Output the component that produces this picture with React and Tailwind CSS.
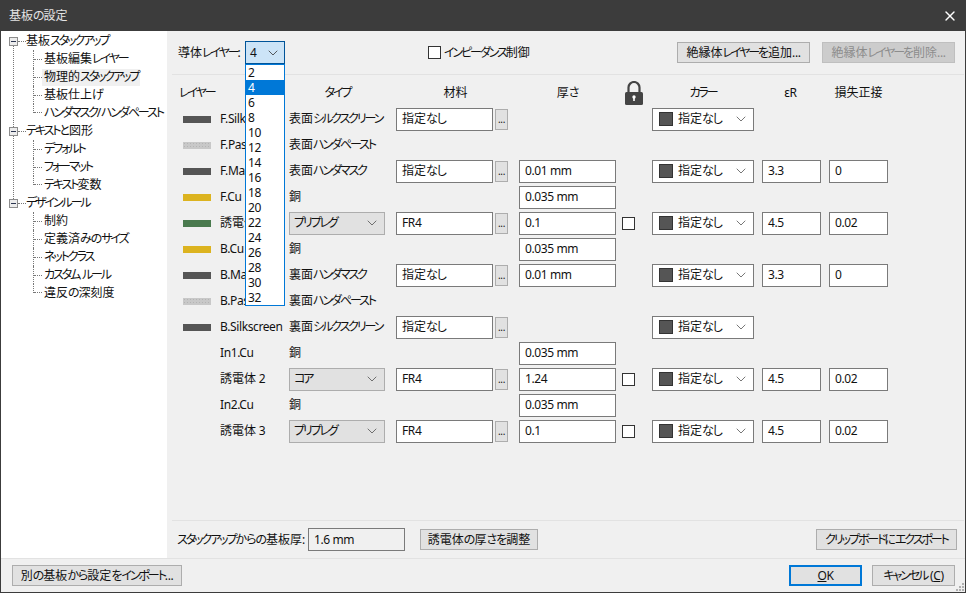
import React from 'react'
import { X, ChevronDown } from 'lucide-react'

const tree = [
  { label: '基板スタックアップ', children: ['基板編集レイヤー', '物理的スタックアップ', '基板仕上げ', 'ハンダマスク/ハンダペースト'] },
  { label: 'テキストと図形', children: ['デフォルト', 'フォーマット', 'テキスト変数'] },
  { label: 'デザインルール', children: ['制約', '定義済みのサイズ', 'ネットクラス', 'カスタム ルール', '違反の深刻度'] },
]

const DARK = 'bg-[#555555]'
const PASTE = 'bg-[#c8c8c8]'
const CU = 'bg-[#dcb31f]'
const GREEN = 'bg-[#4a7a4e]'
const COLS = 'grid grid-cols-[37px_69px_107px_123px_103px_30px_110px_67px_59px]'

const layers = [
  { swatch: DARK, name: 'F.Silkscreen', type: '表面シルクスクリーン', material: '指定なし', color: true },
  { swatch: PASTE, name: 'F.Paste', type: '表面ハンダペースト' },
  { swatch: DARK, name: 'F.Mask', type: '表面ハンダマスク', material: '指定なし', thick: '0.01 mm', color: true, er: '3.3', loss: '0' },
  { swatch: CU, name: 'F.Cu', type: '銅', thick: '0.035 mm' },
  { swatch: GREEN, name: '誘電体 1', select: 'プリプレグ', material: 'FR4', thick: '0.1', lock: true, color: true, er: '4.5', loss: '0.02' },
  { swatch: CU, name: 'B.Cu', type: '銅', thick: '0.035 mm' },
  { swatch: DARK, name: 'B.Mask', type: '裏面ハンダマスク', material: '指定なし', thick: '0.01 mm', color: true, er: '3.3', loss: '0' },
  { swatch: PASTE, name: 'B.Paste', type: '裏面ハンダペースト' },
  { swatch: DARK, name: 'B.Silkscreen', type: '裏面シルクスクリーン', material: '指定なし', color: true },
  { name: 'In1.Cu', type: '銅', thick: '0.035 mm' },
  { name: '誘電体 2', select: 'コア', material: 'FR4', thick: '1.24', lock: true, color: true, er: '4.5', loss: '0.02' },
  { name: 'In2.Cu', type: '銅', thick: '0.035 mm' },
  { name: '誘電体 3', select: 'プリプレグ', material: 'FR4', thick: '0.1', lock: true, color: true, er: '4.5', loss: '0.02' },
]

const counts = ['2', '4', '6', '8', '10', '12', '14', '16', '18', '20', '22', '24', '26', '28', '30', '32']

// the original UI font keeps kanji full width but has much narrower kana
const Jp = ({ text }) => (
  <span>
    {text.match(/[\u4e00-\u9fff]+|[\u3040-\u309f]+|[\u30a0-\u30ff]+|[^\u3040-\u30ff\u4e00-\u9fff]+/g).map((part, i) => {
      if (/[\u4e00-\u9fff]/.test(part)) return <span key={i} className="tracking-normal">{part}</span>
      if (/[\u3040-\u309f]/.test(part)) return <span key={i} className="tracking-[-1px]">{part}</span>
      if (/[\u30a0-\u30ff]/.test(part)) return <span key={i} className="tracking-[-2.1px]">{part}</span>
      return <span key={i}>{part}</span>
    })}
  </span>
)

const Btn = ({ text, children, className = '' }) => (
  <button className={`h-[21px] bg-[#e1e1e1] border border-[#adadad] text-[#111] whitespace-nowrap ${className}`}>
    <Jp text={text} />
    {children}
  </button>
)

const Field = ({ value, className = '' }) => (
  <div className={`h-[23px] bg-white border border-[#7a7a7a] pl-[5px] flex items-center ${className}`}>
    <Jp text={value} />
  </div>
)

const TreeGroup = ({ group, last }) => (
  <div className="relative">
    {!last && <span className="absolute left-[12px] top-[13px] -bottom-[5px] border-l border-dotted border-[#777]"></span>}
    <div className="h-[18px] flex items-center pl-[8px]">
      <span className="w-[9px] h-[9px] border border-[#8c8c8c] bg-[#ececec] flex items-center justify-center shrink-0 relative">
        <span className="w-[5px] h-px bg-[#2a3550]"></span>
      </span>
      <span className="w-[8px] border-t border-dotted border-[#777] shrink-0"></span>
      <Jp text={group.label} />
    </div>
    {group.children.map((child, i) => {
      const end = i === group.children.length - 1
      return (
        <div key={child} className="h-[18px] flex items-center pl-[32px]">
          <span className={`w-[9px] shrink-0 border-l border-dotted border-[#777] flex ${end ? 'h-[9px] self-start items-end' : 'h-full items-center'}`}>
            <span className="w-full border-t border-dotted border-[#777]"></span>
          </span>
          <span className={`px-[2px] h-[17px] flex items-center whitespace-nowrap ${child === '物理的スタックアップ' ? 'bg-[#f0f0f0]' : ''}`}>
            <Jp text={child} />
          </span>
        </div>
      )
    })}
  </div>
)

const LockIcon = () => (
  <svg width="18" height="24" viewBox="0 0 18 24" className="ml-[3px] mb-[1px] self-end">
    <path d="M3.5 12V6.5a5.5 5.5 0 0 1 11 0V12" fill="none" stroke="#444" strokeWidth="2.2" />
    <rect x="0" y="11" width="18" height="13" rx="1.5" fill="#444" />
    <circle cx="9" cy="16" r="1.7" fill="#fff" />
    <rect x="8.2" y="16" width="1.6" height="4" fill="#fff" />
  </svg>
)

const LayerRow = ({ row }) => (
  <div className={`${COLS} h-[26px] items-center`}>
    <div>
      {row.swatch && (
        <div className={`w-[28px] h-[7px] ${row.swatch} ${row.swatch === PASTE ? 'bg-[radial-gradient(#b4b4b4_0.5px,transparent_0.6px)] bg-[length:3px_3px]' : ''}`}></div>
      )}
    </div>
    <div className="whitespace-nowrap overflow-hidden"><Jp text={row.name} /></div>
    <div className="whitespace-nowrap">
      {row.select ? (
        <div className="w-[96px] h-[23px] bg-[#e1e1e1] border border-[#adadad] pl-[4px] pr-[4px] flex items-center justify-between">
          <Jp text={row.select} />
          <ChevronDown size={16} strokeWidth={1.1} color="#444" />
        </div>
      ) : <Jp text={row.type} />}
    </div>
    <div>
      {row.material && (
        <div className="flex items-center gap-[2px]">
          <Field value={row.material} className="w-[97px]" />
          <button className="w-[13px] h-[21px] bg-[#e1e1e1] border border-[#adadad] text-[10px] leading-[16px]">...</button>
        </div>
      )}
    </div>
    <div>{row.thick && <Field value={row.thick} className="w-[97px]" />}</div>
    <div>{row.lock && <div className="w-[13px] h-[13px] bg-white border border-[#333]"></div>}</div>
    <div>
      {row.color && (
        <div className="w-[102px] h-[23px] bg-white border border-[#7a7a7a] pl-[6px] pr-[4px] flex items-center">
          <span className="w-[14px] h-[14px] bg-[#555555] border border-[#333] mr-[5px]"></span>
          <span className="flex-1"><Jp text="指定なし" /></span>
          <ChevronDown size={16} strokeWidth={1.1} color="#444" />
        </div>
      )}
    </div>
    <div>{row.er && <Field value={row.er} className="w-[59px]" />}</div>
    <div>{row.loss && <Field value={row.loss} className="w-[59px]" />}</div>
  </div>
)

const App = () => {
  return (
    <div className="w-[966px] h-[593px] flex flex-col overflow-hidden bg-[#f0f0f0] border-x border-b border-[#3c3c3c] text-[12px] leading-[16px] tracking-[-0.4px] text-[#111] [font-family:'Noto_Sans','Noto_Sans_CJK_JP',sans-serif] [font-feature-settings:'palt']">
      {/* Title bar */}
      <div className="h-[31px] -mx-px bg-[#3c3c3c] flex items-center justify-between pl-[9px] pr-[8px] shrink-0">
        <span className="text-[#e4e4e4] text-[12px]"><Jp text="基板の設定" /></span>
        <X size={16} strokeWidth={2} color="#fff" />
      </div>

      <div className="flex flex-1 min-h-0">
        {/* Sidebar */}
        <div className="w-[166px] bg-white shrink-0 pt-[1px] overflow-hidden">
          {tree.map((group, i) => <TreeGroup key={group.label} group={group} last={i === tree.length - 1} />)}
        </div>

        {/* Content */}
        <div className="flex-1 flex flex-col pl-[5px] pr-[1px]">
          <div className="relative h-[44px] flex items-center border-b border-[#e2e2e2] pl-[6px] pr-[9px] shrink-0">
            <span className="w-[67px] whitespace-nowrap"><Jp text="導体レイヤー:" /></span>
            <div className="w-[40px] h-[23px] bg-[#cce4f7] border border-[#005499] pl-[4px] pr-[3px] flex items-center justify-between">
              4
              <ChevronDown size={16} strokeWidth={1.2} color="#333" />
            </div>
            <div className="ml-[143px] w-[13px] h-[13px] bg-white border border-[#333]"></div>
            <span className="ml-[3px] whitespace-nowrap"><Jp text="インピーダンス制御" /></span>
            <Btn text="絶縁体レイヤーを追加..." className="ml-auto w-[133px]" />
            <Btn text="絶縁体レイヤーを削除..." className="ml-[12px] w-[133px] !bg-[#cccccc] !border-[#bfbfbf] !text-[#8c8c8c]" />

            {/* Open list of the select */}
            <div className="absolute left-[73px] top-[33px] w-[40px] h-[242px] bg-white border border-[#0078d7] z-10">
              {counts.map((n) => (
                <div key={n} className={`h-[15px] pl-[2px] flex items-center ${n === '4' ? 'bg-[#0078d7] text-white' : ''}`}>{n}</div>
              ))}
            </div>
          </div>

          <div className="flex-1 pl-[11px]">
            <div className={`${COLS} h-[31px] pt-[4px] items-center`}>
              <span className="-ml-[4px] whitespace-nowrap"><Jp text="レイヤー" /></span>
              <span></span>
              <span className="text-center pr-[10px]"><Jp text="タイプ" /></span>
              <span className="text-center pr-[4px]"><Jp text="材料" /></span>
              <span className="text-center pr-[6px]"><Jp text="厚さ" /></span>
              <LockIcon />
              <span className="text-center pr-[8px]"><Jp text="カラー" /></span>
              <span className="text-center pr-[10px]">εR</span>
              <span className="text-center whitespace-nowrap"><Jp text="損失正接" /></span>
            </div>
            {layers.map((row) => <LayerRow key={row.name} row={row} />)}
          </div>

          <div className="h-[38px] border-t border-[#e2e2e2] flex items-center pl-[5px] pr-[7px] shrink-0">
            <span className="w-[129px] whitespace-nowrap"><Jp text="スタックアップからの基板厚:" /></span>
            <Field value="1.6 mm" className="ml-[2px] w-[97px] !bg-[#f0f0f0]" />
            <Btn text="誘電体の厚さを調整" className="ml-[15px] w-[118px]" />
            <Btn text="クリップボードにエクスポート" className="ml-auto w-[141px]" />
          </div>
        </div>
      </div>

      {/* Dialog buttons */}
      <div className="relative h-[34px] border-t border-[#e2e2e2] flex items-center pl-[11px] pr-[10px] shrink-0">
        <Btn text="別の基板から設定をインポート..." className="w-[170px]" />
        <button className="ml-auto w-[73px] h-[21px] bg-[#e1e1e1] border-2 border-[#0078d7]"><span className="underline">O</span>K</button>
        <Btn text="キャンセル (" className="ml-[10px] w-[83px]"><span className="underline">C</span>)</Btn>
        <svg width="10" height="10" viewBox="0 0 10 10" className="absolute right-0 bottom-0" fill="#b0b0b0">
          <rect x="7" y="1" width="2" height="2" />
          <rect x="4" y="4" width="2" height="2" />
          <rect x="7" y="4" width="2" height="2" />
          <rect x="1" y="7" width="2" height="2" />
          <rect x="4" y="7" width="2" height="2" />
          <rect x="7" y="7" width="2" height="2" />
        </svg>
      </div>
    </div>
  )
}

export default App
